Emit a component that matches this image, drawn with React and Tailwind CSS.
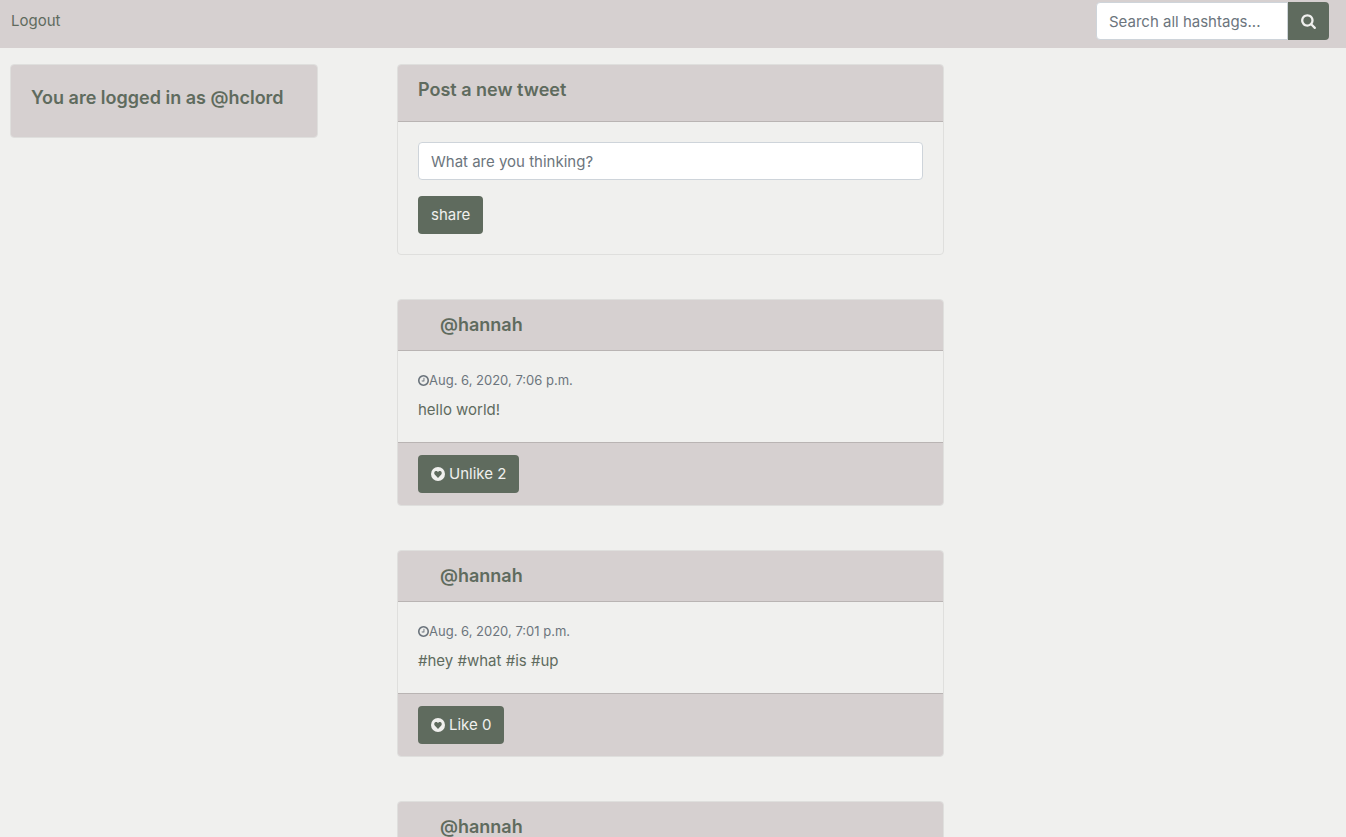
import React from "react";

const posts = [
  { id: 1, user: "@hannah", time: "Aug. 6, 2020, 7:06 p.m.", text: "hello world!", action: "Unlike 2" },
  { id: 2, user: "@hannah", time: "Aug. 6, 2020, 7:01 p.m.", text: "#hey #what #is #up", action: "Like 0" },
  { id: 3, user: "@hannah" },
];

function SearchIcon() {
  return (
    <svg viewBox="0 0 1664 1792" className="h-4 w-[15px] fill-current" aria-hidden="true">
      <path transform="translate(-64 0)" d="M1216 832q0-185-131.5-316.5t-316.5-131.5-316.5 131.5-131.5 316.5 131.5 316.5 316.5 131.5 316.5-131.5 131.5-316.5zm512 832q0 52-38 90t-90 38q-54 0-90-38l-343-342q-179 124-399 124-143 0-273.5-55.5t-225-150-150-225-55.5-273.5 55.5-273.5 150-225 225-150 273.5-55.5 273.5 55.5 225 150 150 225 55.5 273.5q0 220-124 399l343 343q37 37 37 90z" />
    </svg>
  );
}

function ClockIcon() {
  return (
    <svg viewBox="128 128 1536 1536" className="size-[11px] shrink-0 fill-current" aria-hidden="true">
      <path d="M1024 544v448q0 14-9 23t-23 9h-320q-14 0-23-9t-9-23v-64q0-14 9-23t23-9h224v-352q0-14 9-23t23-9h64q14 0 23 9t9 23zm416 352q0-148-73-273t-198-198-273-73-273 73-198 198-73 273 73 273 198 198 273 73 273-73 198-198 73-273zm224 0q0 209-103 385.5t-279.5 279.5-385.5 103-385.5-103-279.5-279.5-103-385.5 103-385.5 279.5-279.5 385.5-103 385.5 103 279.5 279.5 103 385.5z" />
    </svg>
  );
}

function HeartBadge() {
  return (
    <svg viewBox="0 0 14 14" className="size-3.5" aria-hidden="true">
      <circle cx="7" cy="7" r="7" className="fill-[#f0f0ee]" />
      <path
        d="M7 11 3.7 7.4C2.7 6.1 3.3 3.9 5.1 3.9 6 3.9 6.6 4.4 7 5 7.4 4.4 8 3.9 8.9 3.9 10.7 3.9 11.3 6.1 10.3 7.4Z"
        className="fill-[#5f6b5e]"
      />
    </svg>
  );
}

function Card({ children }) {
  return <section className="overflow-hidden rounded border border-[#dfdfdd]">{children}</section>;
}

function Title({ children }) {
  return <h5 className="text-lg leading-[26px] font-semibold">{children}</h5>;
}

function Button({ children, type = "button" }) {
  return (
    <button type={type} className="flex h-[38px] items-center gap-1 rounded bg-[#5f6b5e] px-[13px] text-[#f0f0ee]">
      {children}
    </button>
  );
}

function Post({ post }) {
  return (
    <Card>
      <div className="border-b border-[#b9b4b3] bg-[#d6d0d0] py-3 pr-5 pl-[42px]">
        <Title>{post.user}</Title>
      </div>
      {post.text && (
        <>
          <div className="flex flex-col gap-2 p-5">
            <p className="flex items-center text-[13px] leading-[19px] text-[#6c757d]">
              <ClockIcon />
              {post.time}
            </p>
            <p className="leading-6">{post.text}</p>
          </div>
          <div className="border-t border-[#b9b4b3] bg-[#d6d0d0] px-5 py-3">
            <Button>
              <HeartBadge />
              {post.action}
            </Button>
          </div>
        </>
      )}
    </Card>
  );
}

export default function App() {
  return (
    <div className="h-screen overflow-hidden bg-[#f0f0ee] font-['Inter','Liberation_Sans',sans-serif] text-[15px] text-[#5f6b5e]">
      <nav className="flex items-center justify-between bg-[#d6d0d0] pt-0.5 pr-[17px] pb-2 pl-[11px]">
        <a href="#logout" className="leading-6">Logout</a>
        <form className="flex" onSubmit={(e) => e.preventDefault()}>
          <input
            type="text"
            aria-label="Search all hashtags"
            placeholder="Search all hashtags..."
            className="h-[38px] w-48 rounded-l border border-[#ced4da] bg-white px-3 placeholder:text-[#6c757d]"
          />
          <button type="submit" aria-label="Search" className="flex h-[38px] w-[41px] items-center justify-center rounded-r bg-[#5f6b5e] text-[#f0f0ee]">
            <SearchIcon />
          </button>
        </form>
      </nav>

      <div className="grid grid-cols-[308fr_547fr_313fr] items-start gap-x-[79px] px-2.5 pt-4">
        <aside>
          <Card>
            <div className="bg-[#d6d0d0] px-5 pt-5 pb-[26px]">
              <Title>You are logged in as @hclord</Title>
            </div>
          </Card>
        </aside>

        <main className="flex flex-col gap-11">
          <Card>
            <div className="border-b border-[#b9b4b3] bg-[#d6d0d0] px-5 pt-3 pb-[18px]">
              <Title>Post a new tweet</Title>
            </div>
            <form className="flex flex-col items-start gap-4 p-5" onSubmit={(e) => e.preventDefault()}>
              <input
                type="text"
                aria-label="Post a new tweet"
                placeholder="What are you thinking?"
                className="h-[38px] w-full rounded border border-[#ced4da] bg-white px-3 placeholder:text-[#6c757d]"
              />
              <Button type="submit">share</Button>
            </form>
          </Card>
          {posts.map((post) => (
            <Post key={post.id} post={post} />
          ))}
        </main>
      </div>
    </div>
  );
}
